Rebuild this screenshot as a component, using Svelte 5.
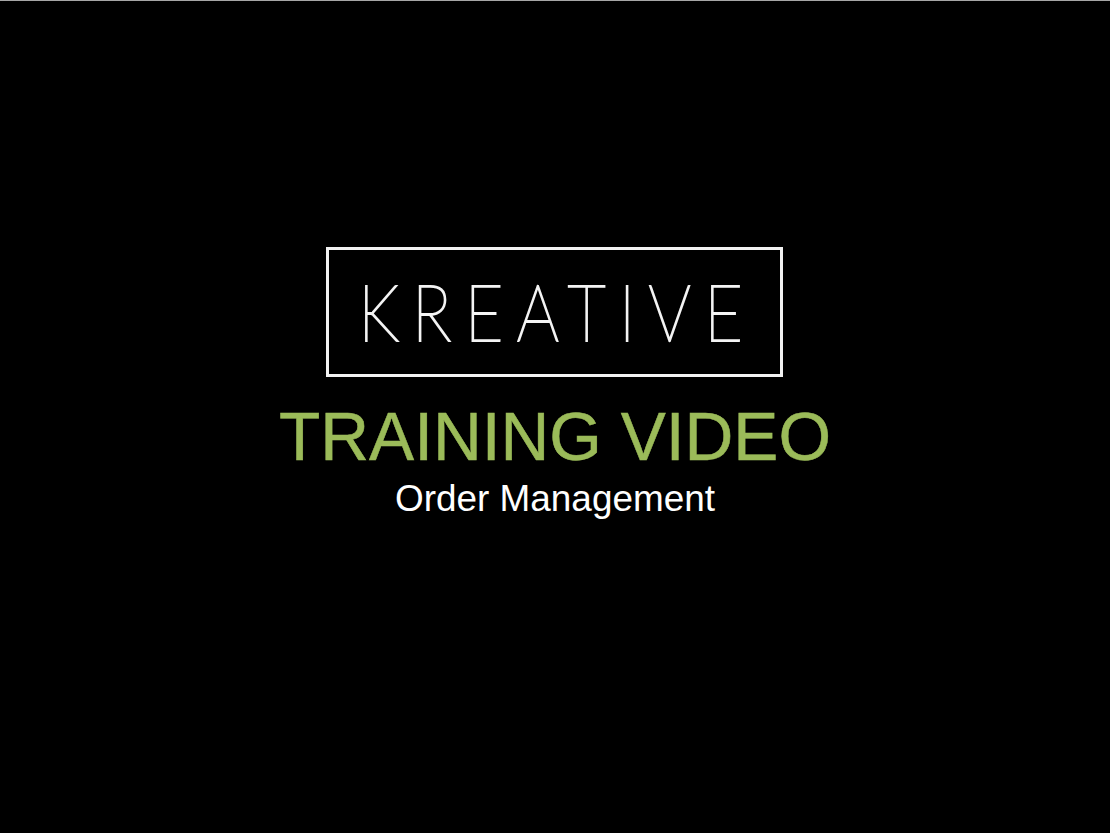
<script>
  const title = "TRAINING VIDEO";
  const subtitle = "Order Management";
</script>

<main class="slide">
  <div class="logo">
    <span class="wordmark">KREATIVE</span>
  </div>
  <h1>{title}</h1>
  <p>{subtitle}</p>
</main>

<style>
  :global(body) {
    margin: 0;
    background: #000;
  }

  .slide {
    height: 832px;
    border-top: 1px solid #a6a6a6;
    background: #000;
    display: flex;
    flex-direction: column;
    align-items: center;
    padding-top: 246px;
    box-sizing: border-box;
    overflow: hidden;
    font-family: "Liberation Sans", Arial, sans-serif;
  }

  .logo {
    width: 451px;
    height: 124px;
    border: 3px solid #f2f2f2;
    display: flex;
    align-items: center;
    justify-content: center;
    margin-left: -1px;
  }

  .wordmark {
    font-family: Lato, sans-serif;
    font-weight: 100;
    font-size: 78px;
    line-height: 1;
    letter-spacing: 15.8px;
    margin-right: -5px;
    margin-top: -2px;
    color: #fff;
    -webkit-text-stroke: 2px #f4f4f4;
    transform: scaleX(0.85);
    white-space: nowrap;
  }

  h1 {
    margin: 20px 0 0;
    font-size: 67.6px;
    font-weight: 400;
    line-height: 79px;
    color: #9bbb59;
    -webkit-text-stroke: 0.5px #9bbb59;
  }

  p {
    margin: 2px 0 0;
    font-size: 36.9px;
    line-height: 42px;
    color: #fff;
  }
</style>
